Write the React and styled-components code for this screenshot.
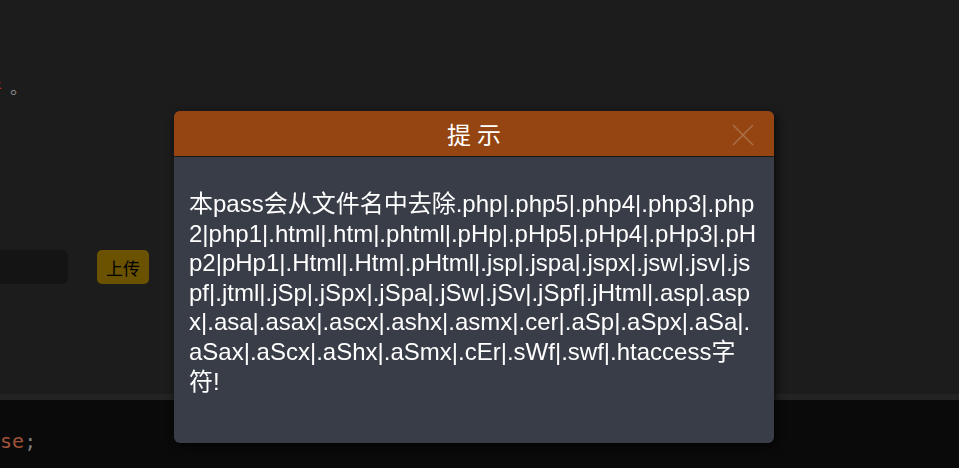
import styled, { createGlobalStyle } from "styled-components";

const GlobalStyle = createGlobalStyle`
  html, body {
    margin: 0;
    padding: 0;
    background: #0a0a0a;
    overflow: hidden;
  }
  body {
    font-family: "Liberation Sans", "Noto Sans CJK SC", sans-serif;
  }
`;

const Page = styled.div`
  height: 468px;
  display: flex;
  flex-direction: column;
  overflow: hidden;
`;

const Main = styled.div`
  height: 394px;
  background: #1c1c1c;
  display: flex;
  flex-direction: column;
  padding-top: 75px;
  box-sizing: border-box;
`;

const Notice = styled.p`
  margin: 0 0 0 -16px;
  font-size: 18px;
  line-height: 22px;
  color: #8a8a8a;
  font-family: "Noto Sans CJK SC", sans-serif;
`;

const Red = styled.span`
  color: #a32a2a;
  margin-right: 8px;
`;

const UploadRow = styled.div`
  margin-top: 153px;
  display: flex;
  align-items: center;
  gap: 29px;
`;

const FileInput = styled.div`
  width: 88px;
  height: 34px;
  margin-left: -20px;
  background: #141414;
  border-radius: 6px;
`;

const UploadButton = styled.button`
  height: 34px;
  padding: 0 9px;
  border: none;
  border-radius: 5px;
  background: #6a5200;
  color: #000;
  font-size: 17px;
  font-family: "Noto Sans CJK SC", sans-serif;
`;

const Strip = styled.div`
  height: 6px;
  background: #232323;
`;

const CodeArea = styled.div`
  flex: 1;
  background: #0a0a0a;
  padding-top: 27px;
  font-family: "DejaVu Sans Mono", monospace;
  font-size: 20px;
  line-height: 28px;
  margin-left: -24px;
`;

const Keyword = styled.span`
  color: ${(p) => p.$color};
`;

const Overlay = styled.div`
  position: fixed;
  inset: 0;
  display: flex;
  justify-content: center;
  align-items: flex-start;
  padding: 111px 11px 0 0;
`;

const Modal = styled.div`
  width: 600px;
  height: 332px;
  display: flex;
  flex-direction: column;
  border-radius: 6px;
  overflow: hidden;
  background: #393d48;
  box-shadow: 2px 3px 10px rgba(0, 0, 0, 0.7);
`;

const Header = styled.div`
  height: 45px;
  flex-shrink: 0;
  background: #944511;
  border-bottom: 1px solid #161616;
  display: flex;
  align-items: center;
  justify-content: center;
  position: relative;
`;

const Title = styled.h3`
  margin: 0;
  color: #fff;
  font-size: 24px;
  font-weight: normal;
  letter-spacing: 6px;
  padding-left: 6px;
  font-family: "Noto Sans CJK SC", sans-serif;
`;

const Close = styled.button`
  position: absolute;
  right: 19px;
  top: 12px;
  width: 24px;
  height: 24px;
  padding: 0;
  border: none;
  background: none;
  display: flex;
`;

const Body = styled.div`
  flex: 1;
  padding: 32px 13px 0 15px;
  color: #fff;
  font-family: "Liberation Sans", "Noto Sans CJK SC", sans-serif;
  font-size: 24px;
  line-height: 29.6px;
  word-break: break-all;
`;

const message =
  "本pass会从文件名中去除.php|.php5|.php4|.php3|.php2|php1|.html|.htm|.phtml|.pHp|.pHp5|.pHp4|.pHp3|.pHp2|pHp1|.Html|.Htm|.pHtml|.jsp|.jspa|.jspx|.jsw|.jsv|.jspf|.jtml|.jSp|.jSpx|.jSpa|.jSw|.jSv|.jSpf|.jHtml|.asp|.aspx|.asa|.asax|.ascx|.ashx|.asmx|.cer|.aSp|.aSpx|.aSa|.aSax|.aScx|.aShx|.aSmx|.cEr|.sWf|.swf|.htaccess字符!";

export default function App() {
  return (
    <>
      <GlobalStyle />
      <Page>
        <Main>
          <Notice>
            <Red>件</Red>。
          </Notice>
          <UploadRow>
            <FileInput />
            <UploadButton>上传</UploadButton>
          </UploadRow>
        </Main>
        <Strip />
        <CodeArea>
          <Keyword $color="#a0533a">else</Keyword>
          <Keyword $color="#7a7a7a">;</Keyword>
        </CodeArea>
      </Page>
      <Overlay>
        <Modal>
          <Header>
            <Title>提示</Title>
            <Close aria-label="close">
              <svg width="24" height="24" viewBox="0 0 24 24">
                <path
                  d="M2 2 L22 22 M22 2 L2 22"
                  stroke="rgba(255,255,255,0.22)"
                  strokeWidth="1.6"
                  fill="none"
                />
              </svg>
            </Close>
          </Header>
          <Body>{message}</Body>
        </Modal>
      </Overlay>
    </>
  );
}
